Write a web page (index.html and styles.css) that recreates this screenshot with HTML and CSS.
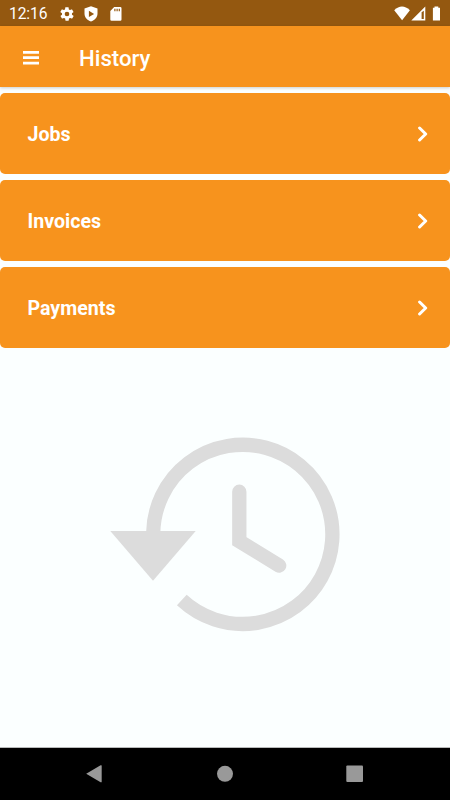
FILE: index.html
```html
<!DOCTYPE html>
<html lang="en">
<head>
<meta charset="utf-8">
<title>History</title>
<link rel="stylesheet" href="styles.css">
</head>
<body>
<div class="status">
  <span class="clock">12:16</span>
  <svg class="gear" width="16" height="16" viewBox="0 0 24 24"><path fill="#fff" fill-rule="evenodd" d="M19.4 13c.1-.3.1-.7.1-1s0-.7-.1-1l2.1-1.600c.2-.2.2-.4.1-.6l-2-3.500c-.1-.2-.4-.3-.6-.2l-2.500 1c-.5-.4-1.100-.7-1.700-1l-.4-2.600c0-.3-.2-.5-.5-.5h-4c-.3 0-.5.2-.5.500l-.4 2.600c-.6.3-1.200.6-1.700 1l-2.500-1c-.2-.1-.5 0-.6.2l-2 3.500c-.1.2-.1.5.1.600L4.600 11c-.1.300-.1.700-.1 1s0 .7.1 1l-2.100 1.600c-.2.200-.2.400-.1.600l2 3.500c.1.200.4.300.6.200l2.500-1c.5.400 1.100.7 1.700 1l.4 2.600c0 .3.2.5.500.5h4c.300 0 .5-.2.500-.5l.4-2.600c.6-.3 1.200-.6 1.700-1l2.500 1c.2.100.5 0 .6-.2l2-3.500c.1-.2.100-.4-.1-.6zM12 15.500a3.500 3.500 0 1 1 0-7 3.500 3.500 0 0 1 0 7z"/></svg>
  <svg class="shield" width="14" height="16" viewBox="0 0 14 16"><path fill="#fff" fill-rule="evenodd" d="M7 .2 13.500 2.600V7.500C13.500 11.300 10.700 14.400 7 15.600 3.300 14.400.5 11.300.5 7.500V2.600zM4.900 4.800v6.200L10.100 7.900z"/></svg>
  <svg class="sd" width="12" height="14" viewBox="0 0 12 14"><path fill="#fff" fill-rule="evenodd" d="M4.200 0H10.300Q11.500 0 11.500 1.200V12.600Q11.500 13.800 10.300 13.800H1.500Q.3 13.800.3 12.600V4zM4.300 1.800V4.300H5.500V1.800zM6.500 1.800V4.300H7.700V1.800zM8.700 1.800V4.300H9.900V1.800z"/></svg>
  <svg class="signals" width="50" height="16" viewBox="0 0 50 16"><g fill="#fff"><path d="M.2 4.300Q8 -3.200 15.900 4.300L8.100 14.300z"/><path fill-rule="evenodd" d="M31.300.5V14.500H17.300zM27.600 6.300V12.900H29.800V4.800z"/><path d="M38.900 1.800H40.500V.5H44.300V1.800H46V14.500H38.900z"/></g></svg>
</div>
<header class="bar">
  <svg class="menu" width="16" height="14" viewBox="0 0 16 14"><path stroke="#fff" stroke-width="2.700" d="M0 1.350H16M0 6.700H16M0 12.100H16"/></svg>
  <h1>History</h1>
</header>
<main>
  <nav class="list">
    <a class="item">Jobs<svg width="12" height="16" viewBox="0 0 12 16"><path d="M2.600 2 8.700 8 2.600 14"/></svg></a>
    <a class="item">Invoices<svg width="12" height="16" viewBox="0 0 12 16"><path d="M2.600 2 8.700 8 2.600 14"/></svg></a>
    <a class="item">Payments<svg width="12" height="16" viewBox="0 0 12 16"><path d="M2.600 2 8.700 8 2.600 14"/></svg></a>
  </nav>
  <svg class="history" width="230" height="196" viewBox="110 436 230 196"><g fill="none" stroke="#dcdcdc" stroke-width="14.300"><path d="M153.200 533A89.600 89.600 0 1 1 181.800 600"/><path stroke-linecap="round" d="M239.300 491.700V541.200L279.200 565.600"/></g><path fill="#dcdcdc" d="M110.300 531H195.700L153 580.700z"/></svg>
</main>
<footer class="navbar">
  <svg width="18" height="20" viewBox="0 0 18 20"><path d="M.2 9.700 14.600 1.300Q15.700.8 15.700 1.800V17.700Q15.700 18.700 14.600 18.200z"/></svg>
  <svg width="18" height="20" viewBox="0 0 18 20"><circle cx="9" cy="9.800" r="8"/></svg>
  <svg width="18" height="20" viewBox="0 0 18 20"><rect x=".3" y="1.400" width="16.700" height="16.700" rx="1"/></svg>
</footer>
</body>
</html>
```
FILE: styles.css
```css
* { box-sizing: border-box; }
body {
  margin: 0;
  width: 450px;
  height: 800px;
  display: flex;
  flex-direction: column;
  overflow: hidden;
  background: #fbffff;
  color: #fff;
  font-family: Roboto, "Liberation Sans", sans-serif;
}
svg { display: block; flex: none; }
.status {
  height: 26px;
  flex: none;
  display: flex;
  align-items: center;
  padding: 1px 6px 0 9px;
  background: #945810;
}
.clock {
  width: 50px;
  padding-top: 1px;
  font-size: 15.6px;
  line-height: 24px;
  letter-spacing: -0.1px;
}
.shield { margin-left: 9px; }
.sd { margin-left: 12px; }
.signals { margin-left: auto; }
.bar {
  height: 61px;
  flex: none;
  display: flex;
  align-items: center;
  padding: 2px 23px 0;
  background: #f7931d;
  box-shadow: 0 1px 3px rgba(0, 0, 0, 0.2);
}
.bar h1 {
  margin: 1px 0 0 40px;
  font-size: 22.2px;
  font-weight: 500;
  line-height: 30px;
}
main {
  flex: 1;
  display: flex;
  flex-direction: column;
  align-items: center;
  border-bottom: 1px solid #b8baba;
}
.list {
  width: 100%;
  display: grid;
  gap: 5.7px;
  padding-top: 6px;
}
.item {
  height: 81.3px;
  display: flex;
  align-items: center;
  justify-content: space-between;
  padding: 2px 21px 0 27.5px;
  border-radius: 5px;
  background: #f7931d;
  font-size: 19.6px;
  font-weight: 700;
}
.item svg { margin-top: -1px; }
.item path {
  fill: none;
  stroke: #fff;
  stroke-width: 3;
  stroke-linecap: round;
  stroke-linejoin: round;
}
.history { margin-top: 87.700px; }
.navbar {
  height: 52px;
  flex: none;
  display: flex;
  justify-content: space-between;
  align-items: center;
  padding: 0 86px;
  background: #000;
}
.navbar svg { fill: #999; }
```
